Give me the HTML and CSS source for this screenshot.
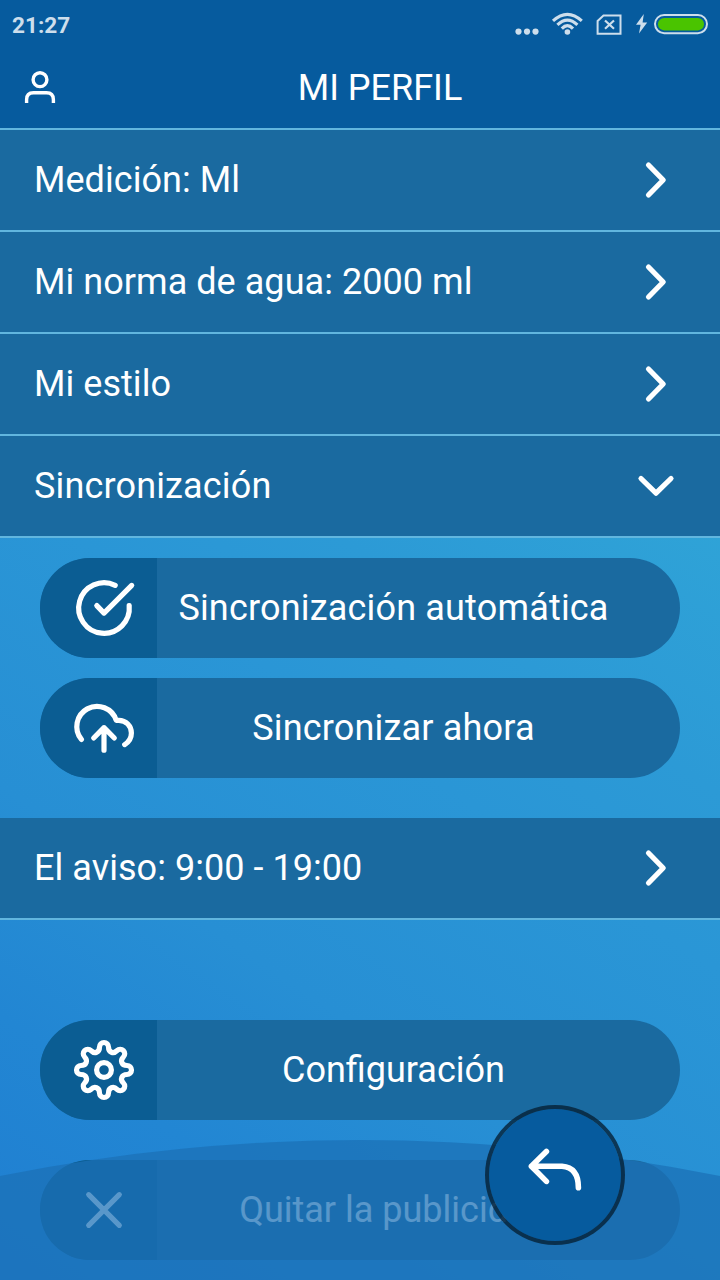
FILE: index.html
```html
<!DOCTYPE html>
<html lang="es">
    <head>
        <meta charset="UTF-8">
        <title>Mi perfil</title>
        <link rel="stylesheet" href="styles.css">
    </head>
    <body>
        <div class="app">
            <div class="status-bar">
                <span class="status-time">21:27</span>
                <svg class="status-icons" viewBox="510 0 210 48" width="210" height="48">
                    <g fill="#cddeec">
                        <circle cx="518.5" cy="31.6" r="3.1"/>
                        <circle cx="527" cy="31.6" r="3.1"/>
                        <circle cx="535.5" cy="31.6" r="3.1"/>
                        <circle cx="567.4" cy="32" r="2.8"/>
                        <path d="M643.8 14L636 24.8H640.6L639 33.6L647.2 22.4H642.6Z"/>
                    </g>
                    <g fill="none" stroke="#cddeec">
                        <path stroke-width="3.1" d="M553 20.9Q567.4 7.8 581.8 20.9M557.4 24.9Q567.4 15.2 577.4 24.9M561.8 28.6Q567.4 22.6 573 28.6"/>
                        <path stroke-width="2" d="M603.5 15.4H620.5V33.8H597.6V21Z"/>
                        <path stroke-width="2.2" d="M605 20.5L614 28.8M614 20.5L605 28.8"/>
                        <rect stroke-width="2" x="655" y="15" width="52" height="18.2" rx="9.1"/>
                    </g>
                    <rect x="658" y="18" width="46" height="12.4" rx="6.2" fill="#4ac400"/>
                </svg>
            </div>
            <div class="header">
                <svg class="header-user" viewBox="0 0 40 40" width="40" height="40">
                    <circle cx="20" cy="11.7" r="6.9"/>
                    <path d="M6.6 35V31.7Q6.6 24.8 13.5 24.8H26.5Q33.4 24.8 33.4 31.7V35"/>
                </svg>
                <h1>MI PERFIL</h1>
            </div>
            <div class="content">
                <ul class="menu">
                    <li class="menu-item">
                        <span>Medición: Ml</span>
                        <svg class="icon" viewBox="-20 -20 40 40" width="40" height="40"><path d="M-7.5-15L7.2 0L-7.5 15"/></svg>
                    </li>
                    <li class="menu-item">
                        <span>Mi norma de agua: 2000 ml</span>
                        <svg class="icon" viewBox="-20 -20 40 40" width="40" height="40"><path d="M-7.5-15L7.2 0L-7.5 15"/></svg>
                    </li>
                    <li class="menu-item">
                        <span>Mi estilo</span>
                        <svg class="icon" viewBox="-20 -20 40 40" width="40" height="40"><path d="M-7.5-15L7.2 0L-7.5 15"/></svg>
                    </li>
                    <li class="menu-item is-open">
                        <span>Sincronización</span>
                        <svg class="icon" viewBox="-20 -20 40 40" width="40" height="40"><path d="M-15-7.5L0 7.2L15-7.5"/></svg>
                    </li>
                </ul>
                <div class="sync-panel">
                    <div class="button">
                        <div class="button-icon">
                            <svg class="icon" viewBox="-32 -32 64 64" width="64" height="64">
                                <path d="M11.2-22.7A25.3 25.3 0 1 0 25.2-2.4"/>
                                <path d="M-7.2-2.4L0 5.1L27.7-22.6"/>
                            </svg>
                        </div>
                        <div class="button-label">Sincronización automática</div>
                    </div>
                    <div class="button">
                        <div class="button-icon">
                            <svg class="icon" viewBox="-32 -32 64 64" width="64" height="64">
                                <path d="M-22.6 11.4A20.2 20.2 0 1 1 12.2-7.7H14.8C22-7.7 27.4-2 27.4 5C27.4 10 24.8 14 20.7 16.6"/>
                                <path d="M0 22.2V-.3M-10.3 10L0-.3L10.3 10"/>
                            </svg>
                        </div>
                        <div class="button-label">Sincronizar ahora</div>
                    </div>
                </div>
                <ul class="menu">
                    <li class="menu-item">
                        <span>El aviso: 9:00 - 19:00</span>
                        <svg class="icon" viewBox="-20 -20 40 40" width="40" height="40"><path d="M-7.5-15L7.2 0L-7.5 15"/></svg>
                    </li>
                </ul>
                <div class="actions">
                    <div class="button">
                        <div class="button-icon">
                            <svg class="icon" viewBox="-32 -32 64 64" width="64" height="64">
                                <circle r="7.4"/>
                                <path d="M-4.5-23A4.5 4.5 0 0 1 4.5-23C4.5-17.5 9.5-15.8 13-19.4A4.5 4.5 0 0 1 19.4-13C15.8-9.5 17.5-4.5 23-4.5A4.5 4.5 0 0 1 23 4.5C17.5 4.5 15.8 9.5 19.4 13A4.5 4.5 0 0 1 13 19.4C9.5 15.8 4.5 17.5 4.5 23A4.5 4.5 0 0 1-4.5 23C-4.5 17.5-9.5 15.8-13 19.4A4.5 4.5 0 0 1-19.4 13C-15.8 9.5-17.5 4.5-23 4.5A4.5 4.5 0 0 1-23-4.5C-17.5-4.5-15.8-9.5-19.4-13A4.5 4.5 0 0 1-13-19.4C-9.5-15.8-4.5-17.5-4.5-23Z"/>
                            </svg>
                        </div>
                        <div class="button-label">Configuración</div>
                    </div>
                    <div class="button">
                        <div class="button-icon">
                            <svg class="icon" viewBox="-32 -32 64 64" width="64" height="64">
                                <path d="M-15.3-15.3L15.3 15.3M15.3-15.3L-15.3 15.3"/>
                            </svg>
                        </div>
                        <div class="button-label">Quitar la publicidad</div>
                    </div>
                </div>
            </div>
            <div class="wave"></div>
            <div class="back-button">
                <svg class="icon" viewBox="485 1105 140 140" width="140" height="140">
                    <path d="M546.4 1151.4L531.4 1166.3L546.4 1181.4M531.4 1166.3H562Q578.4 1167.5 578.4 1187.7"/>
                </svg>
            </div>
        </div>
    </body>
</html>
```
FILE: styles.css
```css
* {
    padding: 0;
    margin: 0;
    box-sizing: border-box;
}

html, body {
    height: 100%;
    width: 100%;
    overflow: hidden;
}

.app {
    position: relative;
    display: flex;
    flex-direction: column;
    width: 720px;
    height: 1280px;
    overflow: hidden;
    background: linear-gradient(34deg, #1f7ed1 0%, #2286d3 15%, #278fd4 28%, #2a96d6 45%, #2c9ad6 55%, #2fa3d7 70%);
    color: #fff;
    font-family: Roboto, sans-serif;
    font-size: 36px;
}

.status-bar {
    display: flex;
    justify-content: space-between;
    align-items: center;
    height: 48px;
    padding-left: 12px;
    background-color: #065b9e;
}

.status-time {
    padding-top: 2px;
    color: #cddeec;
    font-size: 22.6px;
    font-weight: bold;
}

.header {
    display: flex;
    align-items: center;
    height: 82px;
    padding: 0 40px 0 20px;
    background-color: #065b9e;
    border-bottom: 2px solid #61b6df;
}

.header h1 {
    flex: 1;
    padding-left: 20px;
    text-align: center;
    font-size: 36px;
    font-weight: normal;
}

.header-user {
    fill: none;
    stroke: #fff;
    stroke-width: 3.4;
}

.icon {
    display: block;
    fill: none;
    stroke: #fff;
    stroke-width: 5.2;
    stroke-linecap: round;
    stroke-linejoin: round;
}

.menu {
    list-style: none;
}

.menu-item {
    display: flex;
    justify-content: space-between;
    align-items: center;
    height: 102px;
    padding: 0 44px 0 34px;
    background-color: #1a6aa0;
    border-bottom: 2px solid #61b6df;
    letter-spacing: 0.05px;
}

.menu-item.is-open {
    letter-spacing: 0.15px;
}

.sync-panel {
    display: flex;
    flex-direction: column;
    gap: 20px;
    padding: 20px 40px 40px;
    letter-spacing: 0.18px;
}

.actions {
    display: flex;
    flex-direction: column;
    gap: 40px;
    padding: 100px 40px 20px;
}

.button {
    display: flex;
    height: 100px;
    border-radius: 50px;
    overflow: hidden;
    background-color: #1a6aa0;
}

.button-icon {
    display: flex;
    align-items: center;
    width: 117px;
    padding-left: 32px;
    background-color: #0b5d93;
}

.button-label {
    flex: 1;
    padding-right: 50px;
    line-height: 100px;
    text-align: center;
}

/* bottom arc over the last button */
.wave {
    position: absolute;
    top: 1140px;
    left: -1458px;
    width: 3636px;
    height: 3636px;
    border-radius: 50%;
    background-color: rgba(27, 112, 183, 0.73);
}

.back-button {
    position: absolute;
    top: 1105px;
    left: 485px;
    width: 140px;
    height: 140px;
    border-radius: 50%;
    border: 4px solid rgba(5, 33, 54, 0.8);
    background-color: #065b9e;
    background-clip: padding-box;
}

.back-button .icon {
    margin: -4px;
    stroke-width: 5.6;
}
```
